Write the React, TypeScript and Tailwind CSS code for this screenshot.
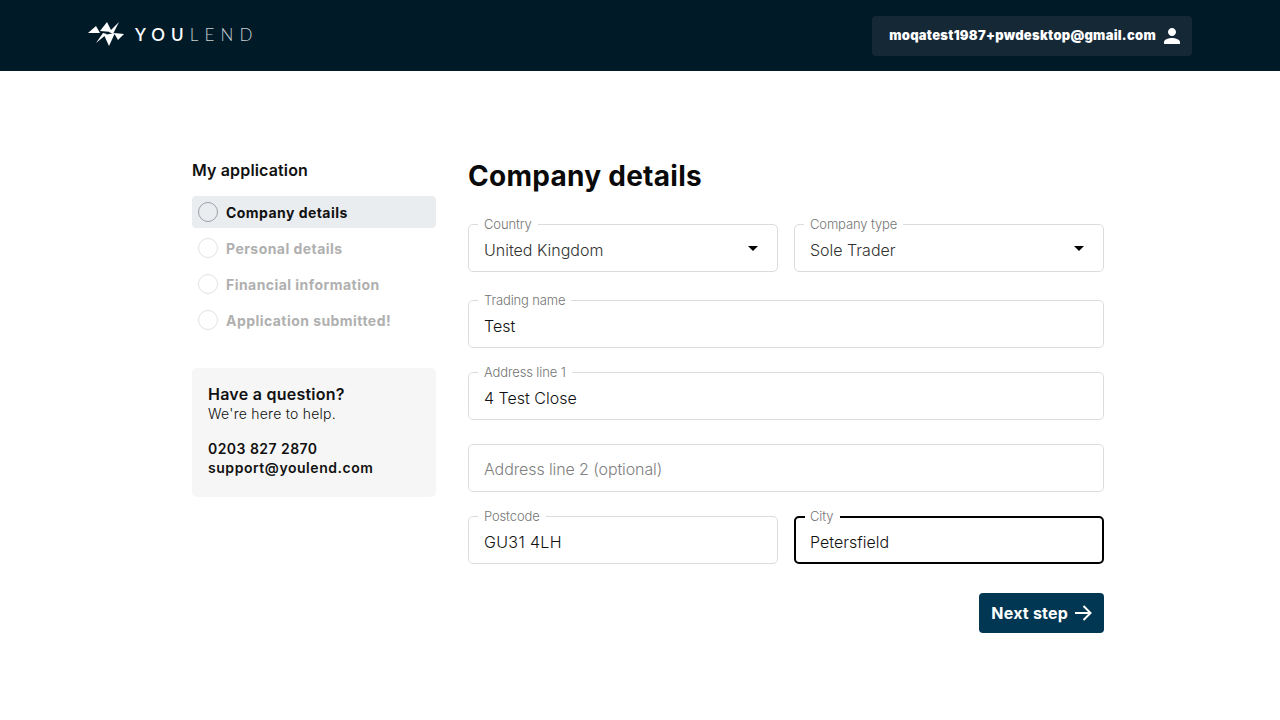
import React from "react";

const Field = ({
  label,
  value,
  select,
  focused,
  muted,
  wide,
}: {
  label?: string;
  value: string;
  select?: boolean;
  focused?: boolean;
  muted?: boolean;
  wide?: boolean;
}) => {
  return (
    <div
      className={`relative h-12 flex-1 rounded-[5px] flex items-center justify-between bg-white ${
        focused ? "border-2 border-black pl-[14px] pr-[18px]" : "border border-[#dcdcdc] pl-[15px] pr-[19px]"
      }`}
    >
      {label && (
        <span className={`absolute ${focused ? "left-[9px] -top-[10px] pl-[5px] pr-[7px]" : "left-[9px] -top-[9px] px-[6px]"} bg-white text-[13px] leading-[16px] font-light tracking-[-0.01em] text-[#757575]`}>
          {label}
        </span>
      )}
      <span
        className={`text-base font-light leading-6 ${
          muted
            ? "text-[#808080] pt-[2px] tracking-[-0.1px]"
            : select
              ? "text-[#333] pt-[3px]"
              : wide
                ? "text-[#111] pt-[3px] tracking-[0.35px]"
                : "text-[#111] pt-[3px]"
        }`}
      >
        {value}
      </span>
      {select && <div className="mt-[1px] w-0 h-0 border-x-[5.5px] border-x-transparent border-t-[5px] border-t-black" />}
    </div>
  );
};

const Step = ({ label, active }: { label: string; active?: boolean }) => {
  return (
    <div
      className={`h-8 flex items-center pl-[6px] gap-2 rounded-[4px] text-sm font-bold tracking-[0.45px] ${
        active ? "bg-[#eaedf0] text-[#111]" : "text-[#b0b0b0]"
      }`}
    >
      <div
        className={`w-5 h-5 rounded-full border ${
          active ? "border-[#9aa0a5]" : "border-[#e2e2e2]"
        }`}
      />
      <span className="pt-[2px]">{label}</span>
    </div>
  );
};

const Logo = () => (
  <svg width="36" height="24" viewBox="0 0 36 24" fill="white">
    <polygon points="0,11 8,4 12,11" />
    <polygon points="12,9 19,0 24,10" />
    <polygon points="31,0 21,10 25,12" />
    <polygon points="8,21 15,11 19,12" />
    <polygon points="16,13 27,11 21,24" />
    <polygon points="26,11 36,12 30,18" />
  </svg>
);

export default function App() {
  return (
    <div className="min-h-[720px] bg-white font-['Inter',sans-serif]">
      {/* Header */}
      <header className="h-[71px] bg-[#001a27] flex items-center justify-between px-[88px]">
        <div className="flex items-center gap-[11px] mb-[3px]">
          <Logo />
          <div className="text-white text-[17px] tracking-[0.36em] leading-none font-['Lato',sans-serif] flex">
            <span className="font-semibold">YOU</span>
            <span className="font-light text-[#c9d0d4]">LEND</span>
          </div>
        </div>
        <div className="w-[320px] h-10 rounded-[4px] bg-[#152836] flex items-center justify-end pr-[8px] gap-[4px]">
          <span className="text-white text-[13px] font-black tracking-[0.26px]">moqatest1987+pwdesktop@gmail.com</span>
          <svg width="24" height="24" viewBox="0 0 24 24" fill="white">
            <path d="M12 12c2.21 0 4-1.79 4-4s-1.79-4-4-4-4 1.79-4 4 1.79 4 4 4zm0 2c-2.67 0-8 1.34-8 4v2h16v-2c0-2.66-5.33-4-8-4z" />
          </svg>
        </div>
      </header>

      <main className="flex pl-[192px] pt-[89px] gap-8">
        {/* Sidebar */}
        <aside className="w-[244px]">
          <h2 className="text-base font-semibold text-[#111] leading-5 mb-4 tracking-[0.15px]">My application</h2>
          <div className="flex flex-col gap-1">
            <Step label="Company details" active />
            <Step label="Personal details" />
            <Step label="Financial information" />
            <Step label="Application submitted!" />
          </div>
          <div className="mt-8 h-[129px] rounded-[5px] bg-[#f6f6f6] px-4 pt-[16px] text-[#111]">
            <div className="text-base font-semibold leading-5 tracking-[0.25px]">Have a question?</div>
            <div className="text-sm font-light leading-[18px] tracking-[0.25px] pt-[1px]">We're here to help.</div>
            <div className="text-sm font-semibold leading-5 mt-[16px] tracking-[0.45px]">0203 827 2870</div>
            <div className="text-sm font-semibold leading-[18px] tracking-[0.55px]">support@youlend.com</div>
          </div>
        </aside>

        {/* Form */}
        <section className="w-[636px]">
          <h1 className="text-[28px] font-bold leading-[32px] text-[#0a0a0a] mb-[32px] tracking-[0.27px]">Company details</h1>
          <div className="flex flex-col">
            <div className="flex gap-4 mb-7">
              <Field label="Country" value="United Kingdom" select />
              <Field label="Company type" value="Sole Trader" select />
            </div>
            <div className="mb-6">
              <Field label="Trading name" value="Test" />
            </div>
            <div className="mb-6">
              <Field label="Address line 1" value="4 Test Close" />
            </div>
            <div className="mb-6">
              <Field value="Address line 2 (optional)" muted />
            </div>
            <div className="flex gap-4">
              <Field label="Postcode" value="GU31 4LH" wide />
              <Field label="City" value="Petersfield" focused />
            </div>
            <div className="flex justify-end mt-[29px]">
              <button className="h-10 w-[125px] rounded-[4px] bg-[#013753] text-white text-base font-bold tracking-[0.2px] flex items-center justify-end pr-[11px] gap-[5px]">
                Next step
                <svg width="20" height="20" viewBox="0 0 20 20" fill="none" stroke="white" strokeWidth="2">
                  <path d="M2 10h15M10.5 3l7 7-7 7" />
                </svg>
              </button>
            </div>
          </div>
        </section>
      </main>
    </div>
  );
}
